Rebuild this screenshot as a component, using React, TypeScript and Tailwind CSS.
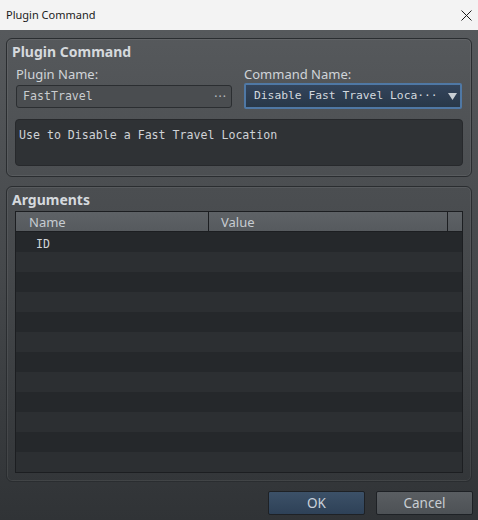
import React from "react";

const ui = "font-['Noto_Sans','Open_Sans',sans-serif]";
const mono = "font-['DejaVu_Sans_Mono','Liberation_Mono',monospace]";

function GroupBox({
  title,
  className,
  children,
}: {
  title: string;
  className?: string;
  children: React.ReactNode;
}) {
  return (
    <div
      className={`flex flex-col rounded-[6px] border border-[#2a2d30] shadow-[inset_0_0_0_1px_rgba(255,255,255,0.07)] ${className ?? ""}`}
    >
      <div className="pl-[5px] pt-[3px] h-[23px] leading-[20px] text-[14px] font-bold text-[#d5d9dd]">
        {title}
      </div>
      {children}
    </div>
  );
}

export default function App() {
  const rows = Array.from({ length: 12 }, (_, i) => i);

  return (
    <div className={`w-[478px] h-[520px] flex flex-col overflow-hidden ${ui}`}>
      {/* window title bar */}
      <div className="h-[30px] bg-[#f3f3f3] flex items-center justify-between pl-[6px] pr-[6px]">
        <span className="text-[11px] text-[#1b1b1b]">Plugin Command</span>
        <svg width="11" height="11" viewBox="0 0 11 11">
          <path d="M0.5 0.5 L10.5 10.5 M10.5 0.5 L0.5 10.5" stroke="#1b1b1b" strokeWidth="1" />
        </svg>
      </div>

      <div className="flex-1 flex flex-col px-[6px] pt-[8px] bg-gradient-to-b from-[#56595c] via-[#45484b] to-[#303336]">
        <GroupBox title="Plugin Command" className="h-[139px]">
          <div className="px-[8px] mt-[3px] flex flex-col">
            <div className="px-[1px] flex gap-[12px]">
              <div className="w-[217px] flex flex-col">
                <div className="h-[18px] leading-[18px] text-[13px] text-[#d0d4d8]">Plugin Name:</div>
                <div className="h-[26px] flex items-center">
                  <div className="w-full h-[23px] rounded-[3px] border border-[#2b2e31] bg-[#4a4d50] flex items-center justify-between pl-[6px] pr-[4px] pt-[2px]">
                    <span className={`${mono} text-[11.6px] text-[#c9cccf]`}>FastTravel</span>
                    <span className="text-[12px] text-[#b8bcc0] tracking-[1px]">···</span>
                  </div>
                </div>
              </div>
              <div className="w-[219px] flex flex-col">
                <div className="h-[18px] leading-[18px] text-[13px] text-[#d0d4d8]">Command Name:</div>
                <div className="h-[26px] rounded-[2px] border-[2px] border-[#4f78a5] bg-gradient-to-b from-[#33445b] to-[#283849] flex items-center justify-between pl-[8px] pr-[3px]">
                  <span className={`${mono} text-[11.3px] text-[#d3d9df] whitespace-nowrap pt-[1px]`}>
                    Disable Fast Travel Loca···
                  </span>
                  <svg width="9" height="7" viewBox="0 0 9 7">
                    <path d="M0 0 H9 L4.5 7 Z" fill="#c8ced4" />
                  </svg>
                </div>
              </div>
            </div>
            <div className="mt-[10px] h-[47px] rounded-[4px] border border-[#27292c] bg-[#2f3235] px-[3px] pt-[1px]">
              <span className={`${mono} text-[11.6px] text-[#cfd3d7]`}>
                Use to Disable a Fast Travel Location
              </span>
            </div>
          </div>
        </GroupBox>

        <GroupBox title="Arguments" className="mt-[9px] h-[296px]">
          <div className="px-[8px] mt-[1px]">
            <div className="border border-[#1c1e21] flex flex-col">
              <div className="h-[20px] flex border-b border-[#1c1e21] bg-gradient-to-b from-[#5e6266] to-[#565a5e] text-[13px] text-[#c7ccd1] leading-[20px]">
                <div className="w-[193px] pl-[13px] border-r border-[#1c1e21]">Name</div>
                <div className="w-[239px] pl-[12px] border-r border-[#1c1e21]">Value</div>
                <div className="flex-1" />
              </div>
              {rows.map((i) => (
                <div
                  key={i}
                  className={`h-[20px] flex items-center ${i % 2 === 0 ? "bg-[#25282b]" : "bg-[#2c2f32]"}`}
                >
                  {i === 0 && (
                    <span className={`${mono} pl-[20px] pt-[5px] text-[11.6px] text-[#d0d4d8]`}>ID</span>
                  )}
                </div>
              ))}
            </div>
          </div>
        </GroupBox>

        <div className="mt-[9px] flex justify-end gap-[11px] mr-[-1px]">
          <button className="w-[97px] h-[24px] rounded-[2px] border border-[#1e2125] bg-gradient-to-b from-[#3c5168] to-[#2e4157] text-[13.5px] text-[#c9d1da] leading-[20px]">
            OK
          </button>
          <button className="w-[97px] h-[24px] rounded-[2px] border border-[#1e2125] bg-gradient-to-b from-[#5a5e62] to-[#4d5155] text-[13.5px] text-[#c9ced3] leading-[20px]">
            Cancel
          </button>
        </div>
      </div>
    </div>
  );
}
